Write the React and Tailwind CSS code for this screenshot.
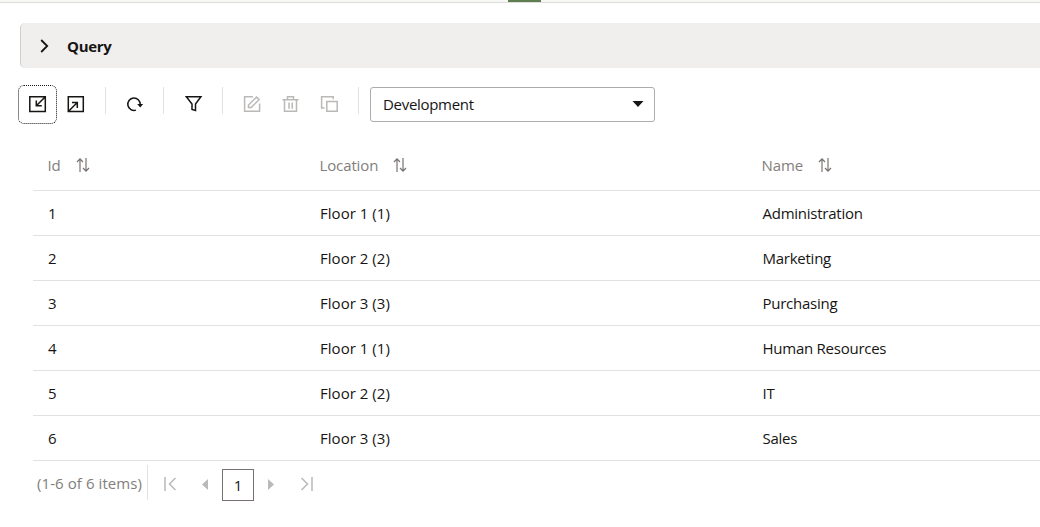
const rows = [
  ['1', 'Floor 1 (1)', 'Administration'],
  ['2', 'Floor 2 (2)', 'Marketing'],
  ['3', 'Floor 3 (3)', 'Purchasing'],
  ['4', 'Floor 1 (1)', 'Human Resources'],
  ['5', 'Floor 2 (2)', 'IT'],
  ['6', 'Floor 3 (3)', 'Sales'],
];

const cellStyles = ['', 'tracking-[0.03px]', 'pl-[0.5px] tracking-[-0.25px]'];

function Icon({ children, className = '', width = 18, height = 18, sw = 1.5 }) {
  return (
    <svg
      className={`block shrink-0 ${className}`}
      width={width}
      height={height}
      viewBox={`0 0 ${width} ${height}`}
      fill="none"
      stroke="currentColor"
      strokeWidth={sw}
    >
      {children}
    </svg>
  );
}

function Separator({ className = '' }) {
  return <div className={`mt-0.5 h-[27px] w-px shrink-0 bg-[#e2e2e1] ${className}`} />;
}

function SortIcon() {
  return (
    <Icon width={14} height={16} sw={1.2} className="text-[#77726f]">
      <path d="M4 15V2M1 5l3-3.2L7 5M10 1v13M7 11l3 3.2 3-3.2" />
    </Icon>
  );
}

function Toolbar() {
  return (
    <div className="ml-[18px] mt-[17px] flex h-[39px] items-start text-[#161513]">
      <button className="flex size-[39px] shrink-0 items-start rounded-[6px] border border-dotted border-[#161513] pl-[10px] pt-[9px]">
        <Icon>
          <path d="M.8 1.8h15.5v14.7H.8zM15.8 2.3L7.3 10.8M7.3 5.5v5.3h5.5" />
        </Icon>
      </button>
      <Icon className="ml-[10px] mt-[10px]">
        <path d="M1.3 1.8h15v14.7h-15zM1.8 16l8.5-8.5M5 7.5h5.3v5.5" />
      </Icon>
      <Separator className="ml-5" />
      <Icon className="ml-5 mt-[10px]">
        <path d="M10 15.1A6.2 6.2 0 1 1 14.2 9.5" />
        <path d="M11.2 9h6l-3 3.4z" fill="currentColor" stroke="none" />
      </Icon>
      <Separator className="ml-[19px]" />
      <Icon className="ml-[21px] mt-[10px]">
        <path d="M1.3 1.7h14.6L10.5 9v6.5l-3.5-1V9z" />
      </Icon>
      <Separator className="ml-[19px]" />
      <Icon className="ml-5 mt-[10px] text-[#bbb9b7]">
        <path d="M10 1.7H1.6v14.6h15V8.5M5.5 12.6V10l8-8 2.6 2.6-8 8z" />
      </Icon>
      <Icon className="ml-[21px] mt-[10px] text-[#bbb9b7]">
        <path d="M.5 4.7h16M5.5 4.5V1.7h6v2.8M2.5 5v11.3h12V5M7 7.5v6.3M10.2 7.5v6.3" />
      </Icon>
      <Icon className="ml-5 mt-[10px] text-[#bbb9b7]">
        <path d="M4.5 13H1.6V1.7h11.6V4.3M6.8 6.5h10.4v9.8H6.8z" />
      </Icon>
      <Separator className="ml-5" />
      <div className="ml-[11px] mt-0.5 flex h-[35px] w-[285px] shrink-0 items-start justify-between rounded-[3px] border border-[#aeacab] pl-3 pr-[10px] pt-[6px]">
        <span className="tracking-[-0.02em]">Development</span>
        <svg width="12" height="6" viewBox="0 0 12 6" className="mt-[7px] fill-[#161513]">
          <path d="M.5 0h11L6 6z" />
        </svg>
      </div>
    </div>
  );
}

function HeaderCell({ label }) {
  return (
    <div className="flex items-center gap-[15px] text-[#827e7b]">
      <span className="tracking-[-0.12px]">{label}</span>
      <SortIcon />
    </div>
  );
}

export default function App() {
  return (
    <div className="h-[527px] w-[1040px] overflow-hidden bg-white font-['Open_Sans','Noto_Sans',sans-serif] text-[15px] leading-5 text-[#161513]">
      <div className="h-[3px] border-b border-[#dedddb] bg-[#f7f7f6]">
        <div className="ml-[508px] h-0.5 w-[33px] bg-[#5f7d4f]" />
      </div>
      <div className="ml-5 mt-5 flex h-[45px] items-center rounded-l-[5px] border-l border-[#d2d0ce] bg-[#f0efed]">
        <Icon width={9} height={14} sw={1.8} className="ml-[19px]">
          <path d="M1.2 1l6 6-6 6" />
        </Icon>
        <span className="ml-[18px] text-[15px] font-bold tracking-[-0.02em]">Query</span>
      </div>
      <Toolbar />
      <div className="ml-[33px] mt-[17px]">
        <div className="grid h-[50px] grid-cols-[272px_442px_1fr] border-b border-[#e3e2e1] pb-[2px] pl-[14.5px]">
          <HeaderCell label="Id" />
          <HeaderCell label="Location" />
          <HeaderCell label="Name" />
        </div>
        {rows.map((row) => (
          <div key={row[0]} className="grid h-[45px] grid-cols-[272px_442px_1fr] items-center border-b border-[#e3e2e1] pl-[15px]">
            {row.map((cell, i) => (
              <span key={i} className={cellStyles[i]}>{cell}</span>
            ))}
          </div>
        ))}
      </div>
      <div className="ml-[37px] mt-1 flex h-9 items-start">
        <span className="mt-2 w-[110px] whitespace-nowrap tracking-[0.08px] text-[#827e7b]">(1-6 of 6 items)</span>
        <div className="h-[35px] w-px bg-[#e2e2e1]" />
        <Icon width={12} height={14} className="ml-4 mt-[12px] text-[#bbb9b7]">
          <path d="M1 0v14M11.5 1L5.5 7l6 6" />
        </Icon>
        <svg width="6" height="11" viewBox="0 0 6 11" className="ml-[26px] mt-[14px] fill-[#bbb9b7]">
          <path d="M6 0v11L0 5.5z" />
        </svg>
        <div className="ml-[14px] mt-1 flex size-8 items-center justify-center border border-[#77726f]">1</div>
        <svg width="6" height="11" viewBox="0 0 6 11" className="ml-[14px] mt-[14px] fill-[#bbb9b7]">
          <path d="M0 0v11l6-5.5z" />
        </svg>
        <Icon width={12} height={14} className="ml-[27px] mt-[12px] text-[#bbb9b7]">
          <path d="M11 0v14M.5 1l6 6-6 6" />
        </Icon>
      </div>
    </div>
  );
}
